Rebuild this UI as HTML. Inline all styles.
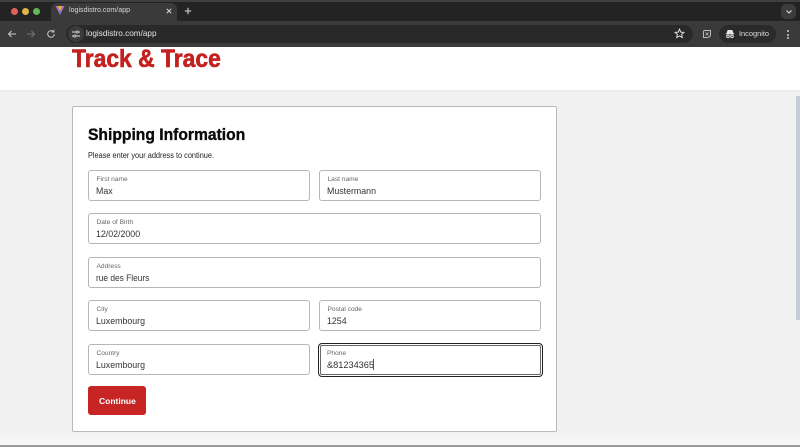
<!DOCTYPE html>
<html lang="en"><head><meta charset="utf-8"><title>Track &amp; Trace</title>
<style>
html,body{margin:0;padding:0;width:800px;height:447px;overflow:hidden;background:#f1f1f1;font-family:"Liberation Sans",sans-serif}
div,span{position:absolute;box-sizing:border-box;white-space:nowrap}
.f{background:#fff;border:1.2px solid #b6b6b6;border-radius:3px}
.l{font-size:6.6px;color:#666;left:7.500px;top:4.500px;line-height:8px}
.v{font-size:9.400px;color:#333;left:7px;top:13.500px;line-height:12px;transform:scaleX(.94);transform-origin:0 0}
</style></head><body>
<div style="left:0;top:0;width:800px;height:47px;background:#232323"></div>
<div style="left:0;top:0;width:800px;height:2px;background:#3e3e3e"></div>
<div style="left:0;top:21px;width:800px;height:26px;background:#3a3a3a"></div>
<div style="left:51px;top:3px;width:126px;height:19px;background:#3a3a3a;border-radius:6px 6px 0 0"></div>
<div style="left:11px;top:8px;width:7px;height:7px;border-radius:50%;background:#e2625a"></div>
<div style="left:22px;top:8px;width:7px;height:7px;border-radius:50%;background:#dfb344"></div>
<div style="left:33px;top:8px;width:7px;height:7px;border-radius:50%;background:#62b85a"></div>
<svg style="position:absolute;left:55px;top:5px" width="10" height="11" viewBox="0 0 10 11"><path d="M0.500 1H9.500L5 10Z" fill="#b06ac0"/><path d="M2.500 1H7.500L5 6Z" fill="#e0b040"/><path d="M4 6H6L5 10Z" fill="#5a7ad0"/></svg>
<span style="left:69px;top:5px;font-size:7.100px;line-height:11px;color:#d8d8d8">logisdistro.com/app</span>
<svg style="position:absolute;left:164.500px;top:7px" width="8" height="8" viewBox="0 0 8 8"><path d="M1.800 1.800L6.200 6.200M6.200 1.800L1.800 6.200" stroke="#ddd" stroke-width="1"/></svg>
<svg style="position:absolute;left:184px;top:7px" width="8" height="8" viewBox="0 0 8 8"><path d="M4 .8V7.200M.8 4H7.200" stroke="#ddd" stroke-width="1"/></svg>
<div style="left:781px;top:4px;width:15px;height:15px;background:#3c3c3c;border-radius:5px"></div>
<svg style="position:absolute;left:785px;top:9px" width="8" height="6" viewBox="0 0 8 6"><path d="M1.500 1.500L4 4L6.500 1.500" stroke="#ddd" stroke-width="1.100" fill="none"/></svg>
<svg style="position:absolute;left:7px;top:29px" width="10" height="10" viewBox="0 0 10 10"><path d="M9 5H1.500M4.500 2L1.500 5L4.500 8" stroke="#c8c8c8" stroke-width="1" fill="none"/></svg>
<svg style="position:absolute;left:26px;top:29px" width="10" height="10" viewBox="0 0 10 10"><path d="M1 5H8.500M5.500 2L8.500 5L5.500 8" stroke="#777" stroke-width="1" fill="none"/></svg>
<svg style="position:absolute;left:46px;top:29px" width="10" height="10" viewBox="0 0 10 10"><path d="M8.300 5A3.300 3.300 0 1 1 7.300 2.600M7.800 .8V3H5.600" stroke="#c8c8c8" stroke-width="1" fill="none"/></svg>
<div style="left:66px;top:25px;width:627px;height:18px;background:#292929;border-radius:9px"></div>
<div style="left:68px;top:26px;width:16px;height:16px;background:#3c3c3c;border-radius:50%"></div>
<svg style="position:absolute;left:71px;top:30px" width="10" height="8" viewBox="0 0 10 8"><path d="M1 2H5M7.500 2H9M1 6H2.500M5 6H9" stroke="#ddd" stroke-width="1"/><circle cx="6.200" cy="2" r="1.100" fill="none" stroke="#ddd" stroke-width=".8"/><circle cx="3.800" cy="6" r="1.100" fill="none" stroke="#ddd" stroke-width=".8"/></svg>
<span style="left:86px;top:28px;font-size:8.200px;line-height:12px;color:#e4e4e4">logisdistro.com/app</span>
<svg style="position:absolute;left:674px;top:28px" width="11" height="11" viewBox="0 0 11 11"><path d="M5.500 1.200L6.800 4.100L9.900 4.400L7.600 6.400L8.300 9.500L5.500 7.900L2.700 9.500L3.400 6.400L1.100 4.400L4.200 4.100Z" fill="none" stroke="#ddd" stroke-width="1"/></svg>
<svg style="position:absolute;left:702px;top:29px" width="10" height="10" viewBox="0 0 10 10"><path d="M2.500 1.500H8.500V5.500C8.500 7.500 7 8.500 5 8.500H1.500V4C1.500 2.500 1.500 1.500 2.500 1.500Z" fill="none" stroke="#bbb" stroke-width="1"/><path d="M3.500 3.500L6.500 6.500M6.500 3.500L3.500 6.500" stroke="#bbb" stroke-width=".8"/></svg>
<div style="left:719px;top:25px;width:57px;height:18px;background:#2a2a2a;border-radius:9px"></div>
<svg style="position:absolute;left:725px;top:29px" width="10" height="10" viewBox="0 0 10 10"><path d="M3 1.500H7L8 4.500H2ZM.8 4.700H9.200" stroke="#e4e4e4" stroke-width="1" fill="#e4e4e4"/><circle cx="3" cy="7.300" r="1.300" fill="none" stroke="#e4e4e4" stroke-width="1"/><circle cx="7" cy="7.300" r="1.300" fill="none" stroke="#e4e4e4" stroke-width="1"/></svg>
<span style="left:739px;top:28px;font-size:7.400px;line-height:12px;color:#dedede">Incognito</span>
<div style="left:787px;top:30px;width:2px;height:2px;background:#ccc;border-radius:50%"></div>
<div style="left:787px;top:33.500px;width:2px;height:2px;background:#ccc;border-radius:50%"></div>
<div style="left:787px;top:37px;width:2px;height:2px;background:#ccc;border-radius:50%"></div>

<div style="left:0;top:47px;width:800px;height:44px;background:#fff;border-bottom:1px solid #ebebeb"></div>
<span style="left:72px;top:44px;font-size:25px;line-height:30px;font-weight:700;color:#c3201f;-webkit-text-stroke:.6px #c3201f;transform:scaleX(.915);transform-origin:0 0">Track &amp; Trace</span>

<div style="left:796px;top:96px;width:4px;height:224px;background:#c5ccd6"></div>

<div style="left:0;top:432px;width:800px;height:13px;background:linear-gradient(#f1f1f1,#f7f7f7)"></div>
<div style="left:72px;top:106px;width:485px;height:326px;background:#fff;border:1px solid #b9b9b9;border-radius:2px"></div>
<span style="left:88px;top:124px;font-size:17px;line-height:21px;font-weight:700;color:#0a0a0a;-webkit-text-stroke:.35px #0a0a0a;transform:scaleX(.92);transform-origin:0 0">Shipping Information</span>
<span style="left:88px;top:150px;font-size:8px;line-height:11px;color:#222;transform:scaleX(.92);transform-origin:0 0">Please enter your address to continue.</span>

<div class="f" style="left:88px;top:170px;width:222px;height:31px"><span class="l">First name</span><span class="v">Max</span></div>
<div class="f" style="left:319px;top:170px;width:222px;height:31px"><span class="l">Last name</span><span class="v">Mustermann</span></div>
<div class="f" style="left:88px;top:213px;width:453px;height:31px"><span class="l">Date of Birth</span><span class="v">12/02/2000</span></div>
<div class="f" style="left:88px;top:257px;width:453px;height:31px"><span class="l">Address</span><span class="v" style="transform:scaleX(.89)">rue des Fleurs</span></div>
<div class="f" style="left:88px;top:300px;width:222px;height:31px"><span class="l">City</span><span class="v">Luxembourg</span></div>
<div class="f" style="left:319px;top:300px;width:222px;height:31px"><span class="l">Postal code</span><span class="v">1254</span></div>
<div class="f" style="left:88px;top:344px;width:222px;height:31px"><span class="l">Country</span><span class="v">Luxembourg</span></div>
<div class="f" style="left:317.500px;top:342.500px;width:225.500px;height:34px;border:1.500px solid #222;border-radius:4px;box-shadow:inset 0 0 0 1px #fff,inset 0 0 0 2px #666"><span class="l" style="left:8.500px;top:6.500px">Phone</span><span class="v" style="left:8px;top:15px;transform:scaleX(.98)">&amp;81234365</span><span style="left:54.500px;top:15.500px;width:1px;height:11px;background:#555"></span></div>

<div style="left:88px;top:386px;width:58px;height:29px;background:#c62523;border-radius:3px"></div>
<span style="left:99px;top:395px;font-size:8.500px;line-height:12px;font-weight:700;color:#fff">Continue</span>

<div style="left:0;top:445px;width:800px;height:2px;background:#9a9a9a"></div>
</body></html>
